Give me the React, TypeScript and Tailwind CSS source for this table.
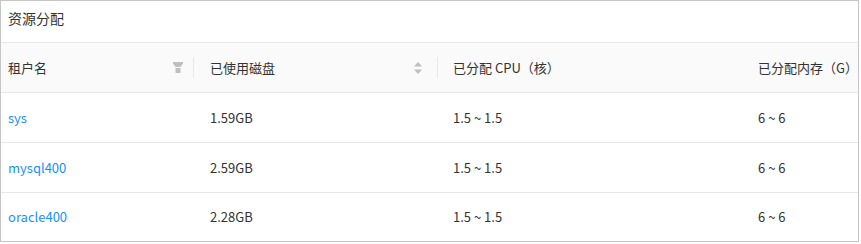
const rows = [
    { name: 'sys', disk: '1.59GB', cpu: '1.5 ~ 1.5', mem: '6 ~ 6' },
    { name: 'mysql400', disk: '2.59GB', cpu: '1.5 ~ 1.5', mem: '6 ~ 6' },
    { name: 'oracle400', disk: '2.28GB', cpu: '1.5 ~ 1.5', mem: '6 ~ 6' },
];

function FilterIcon() {
    return (
        <svg width="10" height="11" viewBox="0 0 10 11" className="fill-[#bfbfbf]">
            <path d="M0 0h10v1.5L7.5 5h-5L0 1.5z" />
            <rect x="2.5" y="6" width="5" height="5" />
        </svg>
    );
}

function SortIcon() {
    return (
        <svg width="8" height="12" viewBox="0 0 8 12" className="fill-[#bfbfbf]">
            <path d="M4 0L8 4.5H0z" />
            <path d="M0 7.5h8L4 12z" />
        </svg>
    );
}

function Divider() {
    return <span className="w-px h-[21px] bg-[#e8e8e8]" />;
}

export default function App() {
    return (
        <div
            className="w-[859px] border border-[#c6c6c6] bg-white text-[13px] text-[#333]"
            style={{ fontFamily: '"Noto Sans CJK SC", "Noto Sans", sans-serif' }}
        >
            <div className="h-[42px] pt-[7px] pl-[7px] text-[14px] leading-[20px] border-b border-[#e8e8e8]">
                资源分配
            </div>

            <div className="grid grid-cols-[193px_244px_305px_1fr] h-[50px] bg-[#fafafa] border-b border-[#e8e8e8] items-center">
                <div className="flex items-center pl-[7px]">
                    <span className="flex-1">租户名</span>
                    <FilterIcon />
                    <span className="w-[10px]" />
                    <Divider />
                </div>
                <div className="flex items-center pl-4">
                    <span className="flex-1">已使用磁盘</span>
                    <SortIcon />
                    <span className="w-[15px]" />
                    <Divider />
                </div>
                <div className="pl-[15px]">已分配 CPU（核）</div>
                <div className="pl-[15px] whitespace-nowrap">已分配内存（G）</div>
            </div>

            {rows.map((row, i) => (
                <div
                    key={row.name}
                    className={
                        i < rows.length - 1
                            ? 'grid grid-cols-[193px_244px_305px_1fr] h-[50px] items-center border-b border-[#e8e8e8]'
                            : 'grid grid-cols-[193px_244px_305px_1fr] h-[48px] items-center'
                    }
                >
                    <span className="pl-[7px] text-[#1890ff]">{row.name}</span>
                    <span className="pl-4">{row.disk}</span>
                    <span className="pl-[15px]">{row.cpu}</span>
                    <span className="pl-[15px]">{row.mem}</span>
                </div>
            ))}
        </div>
    );
}
